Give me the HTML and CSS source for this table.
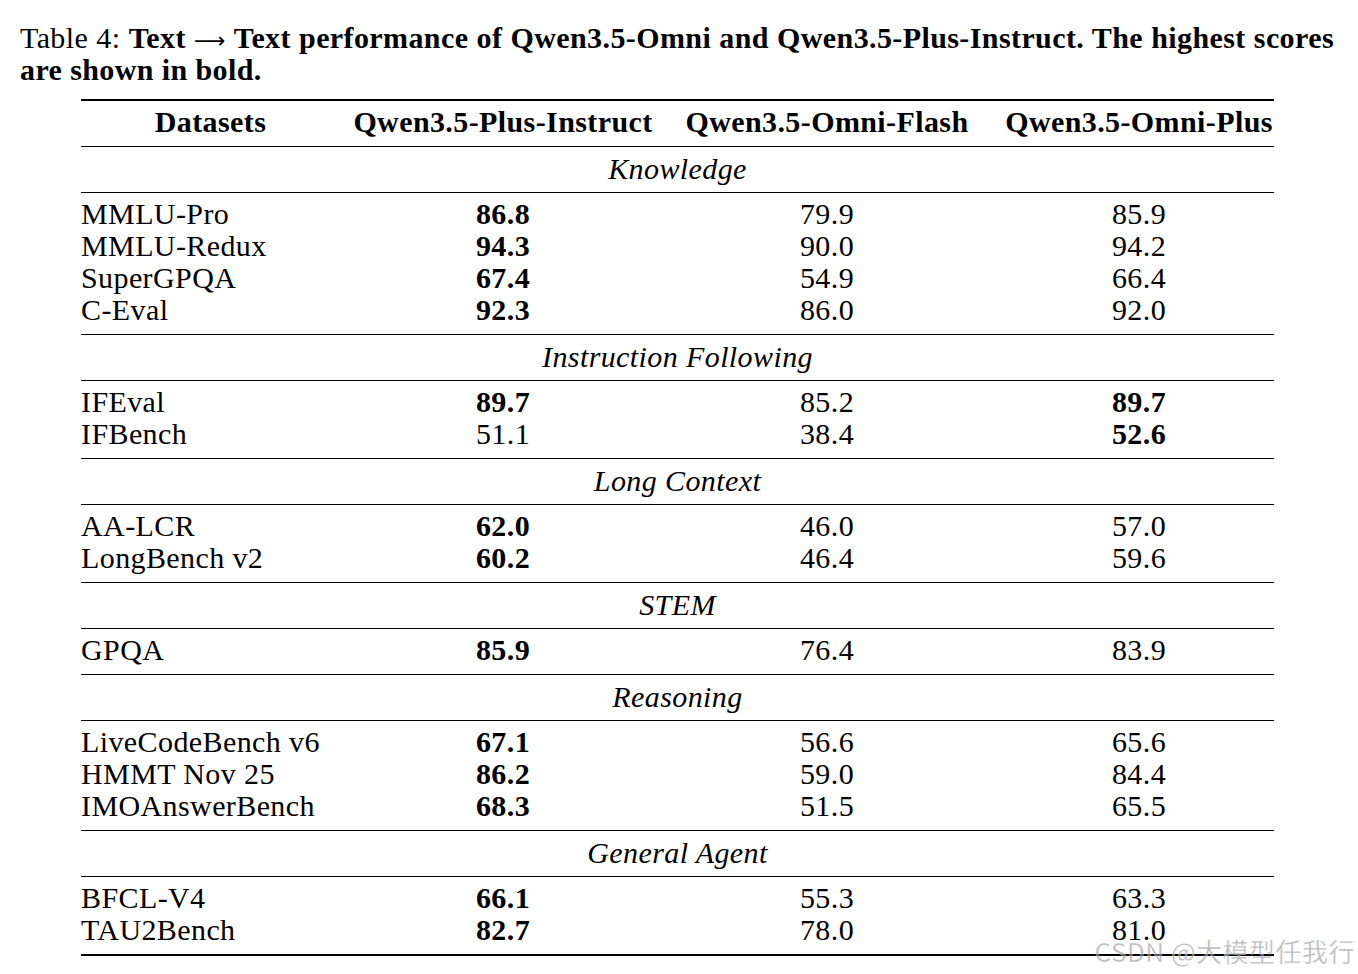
FILE: index.html
```html
<!DOCTYPE html>
<html>
<head>
    <meta charset="utf-8">
    <title>Table 4 - Text performance</title>
    <link rel="stylesheet" href="styles.css">
</head>
<body>
    <div class="page">
        <p class="caption">
            <span class="caption-line full">Table 4: <b>Text</b> <span class="arrow">&#x27F6;</span> <b>Text performance of Qwen3.5-Omni and Qwen3.5-Plus-Instruct. The highest scores</b></span>
            <span class="caption-line"><b>are shown in bold.</b></span>
        </p>

        <div class="results">
            <div class="row head">
                <div class="cell name">Datasets</div>
                <div class="cell">Qwen3.5-Plus-Instruct</div>
                <div class="cell">Qwen3.5-Omni-Flash</div>
                <div class="cell last">Qwen3.5-Omni-Plus</div>
            </div>

            <div class="section">Knowledge</div>
            <div class="group">
                <div class="row"><div class="cell name">MMLU-Pro</div><div class="cell best">86.8</div><div class="cell">79.9</div><div class="cell last">85.9</div></div>
                <div class="row"><div class="cell name">MMLU-Redux</div><div class="cell best">94.3</div><div class="cell">90.0</div><div class="cell last">94.2</div></div>
                <div class="row"><div class="cell name">SuperGPQA</div><div class="cell best">67.4</div><div class="cell">54.9</div><div class="cell last">66.4</div></div>
                <div class="row"><div class="cell name">C-Eval</div><div class="cell best">92.3</div><div class="cell">86.0</div><div class="cell last">92.0</div></div>
            </div>

            <div class="section">Instruction Following</div>
            <div class="group">
                <div class="row"><div class="cell name">IFEval</div><div class="cell best">89.7</div><div class="cell">85.2</div><div class="cell last best">89.7</div></div>
                <div class="row"><div class="cell name">IFBench</div><div class="cell">51.1</div><div class="cell">38.4</div><div class="cell last best">52.6</div></div>
            </div>

            <div class="section">Long Context</div>
            <div class="group">
                <div class="row"><div class="cell name">AA-LCR</div><div class="cell best">62.0</div><div class="cell">46.0</div><div class="cell last">57.0</div></div>
                <div class="row"><div class="cell name">LongBench v2</div><div class="cell best">60.2</div><div class="cell">46.4</div><div class="cell last">59.6</div></div>
            </div>

            <div class="section">STEM</div>
            <div class="group">
                <div class="row"><div class="cell name">GPQA</div><div class="cell best">85.9</div><div class="cell">76.4</div><div class="cell last">83.9</div></div>
            </div>

            <div class="section">Reasoning</div>
            <div class="group">
                <div class="row"><div class="cell name">LiveCodeBench v6</div><div class="cell best">67.1</div><div class="cell">56.6</div><div class="cell last">65.6</div></div>
                <div class="row"><div class="cell name">HMMT Nov 25</div><div class="cell best">86.2</div><div class="cell">59.0</div><div class="cell last">84.4</div></div>
                <div class="row"><div class="cell name">IMOAnswerBench</div><div class="cell best">68.3</div><div class="cell">51.5</div><div class="cell last">65.5</div></div>
            </div>

            <div class="section">General Agent</div>
            <div class="group final">
                <div class="row"><div class="cell name">BFCL-V4</div><div class="cell best">66.1</div><div class="cell">55.3</div><div class="cell last">63.3</div></div>
                <div class="row"><div class="cell name">TAU2Bench</div><div class="cell best">82.7</div><div class="cell">78.0</div><div class="cell last">81.0</div></div>
            </div>
        </div>

        <div class="watermark">CSDN @大模型任我行</div>
    </div>
</body>
</html>
```

FILE: styles.css
```css
body {
    margin: 0;
    background-color: white;
    color: #000;
    font-family: "Liberation Serif", "Times New Roman", serif;
}

.page {
    position: relative;
    width: 1358px;
    height: 974px;
    overflow: hidden;
}

.caption {
    margin: 0;
    padding: 22px 24px 0 20px;
    font-size: 30px;
    line-height: 32px;
    letter-spacing: 0.4px;
}

.caption-line {
    display: block;
}

.caption-line.full {
    text-align: justify;
    text-align-last: justify;
}

.arrow {
    font-family: "DejaVu Sans", sans-serif;
    font-size: 22px;
    line-height: 0;
    letter-spacing: 0;
}

.results {
    margin: 13px 0 0 81px;
    width: 1193px;
    border-top: 2px solid #000;
    border-bottom: 2px solid #000;
    font-size: 30px;
    line-height: 32px;
    letter-spacing: 0.4px;
}

.row {
    display: grid;
    grid-template-columns: 259px 326px 322px 286px;
}

.cell {
    text-align: center;
}

.cell.name {
    text-align: left;
}

.cell.last {
    padding-left: 16px;
}

.cell.best {
    font-weight: bold;
}

.head {
    padding: 5px 0 8px;
    font-weight: bold;
    border-bottom: 1px solid #000;
}

.head .cell.name {
    text-align: center;
}

.section {
    padding: 6px 0 7px;
    text-align: center;
    font-style: italic;
    border-bottom: 1px solid #000;
}

.group {
    padding: 5px 0 8px;
    border-bottom: 1px solid #000;
}

.group.final {
    border-bottom: none;
}

.watermark {
    position: absolute;
    right: 3px;
    bottom: 8px;
    font-family: "Noto Sans CJK SC", "Noto Sans", sans-serif;
    font-size: 26px;
    line-height: 30px;
    letter-spacing: 0.5px;
    color: rgba(140, 140, 140, 0.6);
    -webkit-text-stroke: 0.5px rgba(255, 255, 255, 0.7);
}
```
